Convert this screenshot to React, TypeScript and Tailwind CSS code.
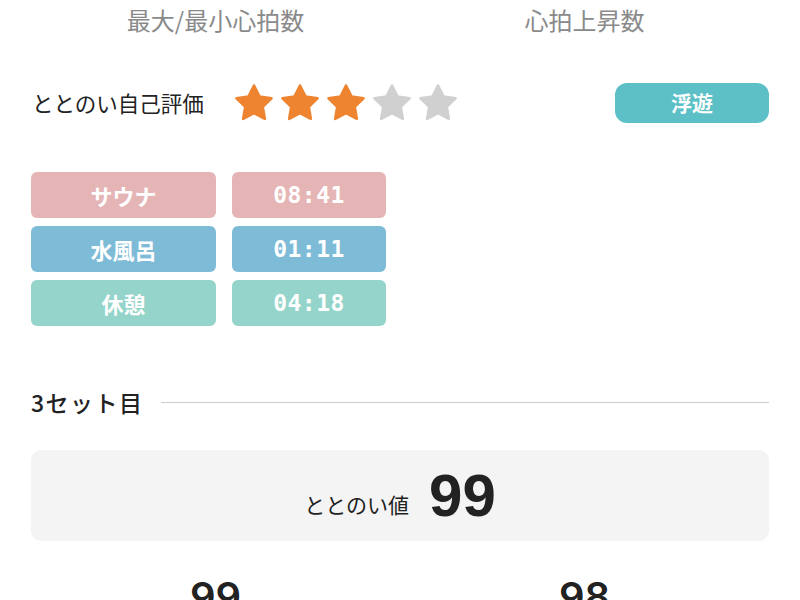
import React from "react";

const jp = { fontFamily: '"Noto Sans CJK JP", "Noto Sans", sans-serif' };
const mono = { fontFamily: '"DejaVu Sans Mono", "Liberation Mono", monospace' };
const num = { fontFamily: '"Liberation Sans", Arial, sans-serif' };
const inter = { fontFamily: 'Inter, "Noto Sans", sans-serif' };

function Star({ filled }: { filled: boolean }) {
  const c = filled ? "#ef8430" : "#d0d0d0";
  return (
    <svg width="42" height="42" viewBox="0 0 24 24" className="block">
      <path
        d="M12 2l3.09 6.26L22 9.27l-5 4.87 1.18 6.88L12 17.77l-6.18 3.25L7 14.14 2 9.27l6.91-1.01L12 2z"
        fill={c}
        stroke={c}
        strokeWidth="1.5"
        strokeLinejoin="round"
      />
    </svg>
  );
}

const rows = [
  { label: "サウナ", time: "08:41", bg: "bg-[#e5b5b6]" },
  { label: "水風呂", time: "01:11", bg: "bg-[#7ebbd7]" },
  { label: "休憩", time: "04:18", bg: "bg-[#94d4ca]" },
];

export default function App() {
  return (
    <div className="w-[800px] h-[600px] overflow-hidden bg-white px-[31px]" style={jp}>
      {/* top labels */}
      <div className="grid grid-cols-2 pt-[4px]">
        <div className="text-center text-[24px] leading-[32px] text-[#8a8a8a]">最大/最小心拍数</div>
        <div className="text-center text-[24px] leading-[32px] text-[#8a8a8a]">心拍上昇数</div>
      </div>

      {/* rating row */}
      <div className="mt-[47px] flex h-[40px] items-center">
        <div className="w-[202px] pl-[1px] text-[21.5px] text-[#222]">ととのい自己評価</div>
        <div className="flex gap-[4px]">
          <Star filled />
          <Star filled />
          <Star filled />
          <Star filled={false} />
          <Star filled={false} />
        </div>
        <div className="ml-auto flex h-[40px] w-[154px] items-center justify-center rounded-[12px] bg-[#5ec0c7] text-[21px] font-bold text-white">
          浮遊
        </div>
      </div>

      {/* timers */}
      <div className="mt-[49px] flex flex-col gap-[8px]">
        {rows.map((r) => (
          <div key={r.label} className="flex gap-[16px]">
            <div className={`flex h-[46px] w-[185px] items-center justify-center rounded-[6px] ${r.bg} text-[22px] font-bold text-white`}>
              {r.label}
            </div>
            <div
              className={`flex h-[46px] w-[154px] items-center justify-center rounded-[6px] ${r.bg} text-[23px] font-bold text-white tracking-[0.5px]`}
              style={mono}
            >
              {r.time}
            </div>
          </div>
        ))}
      </div>

      {/* section header */}
      <div className="mt-[61px] flex h-[30px] items-center gap-[17px]">
        <div className="text-[23px] font-medium text-[#222] tracking-[1.5px]">3セット目</div>
        <div className="h-px flex-1 bg-[#cccccc]" />
      </div>

      {/* summary */}
      <div className="mt-[33px] flex h-[91px] items-center justify-center gap-[20px] rounded-[10px] bg-[#f4f4f4]">
        <span className="mt-[18px] text-[21px] text-[#222]">ととのい値</span>
        <span className="text-[60px] font-bold leading-none text-[#222]" style={num}>99</span>
      </div>

      {/* bottom numbers */}
      <div className="mt-[32px] grid grid-cols-2">
        <div className="text-center text-[40px] font-semibold leading-[48px] text-[#222]" style={inter}>99</div>
        <div className="text-center text-[40px] font-semibold leading-[48px] text-[#222]" style={inter}>98</div>
      </div>
    </div>
  );
}
